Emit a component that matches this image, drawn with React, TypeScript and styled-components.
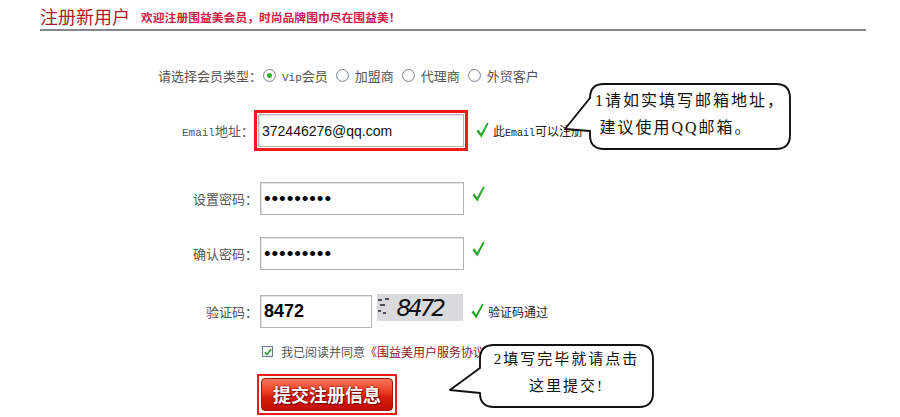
import React from 'react';
import styled, { createGlobalStyle } from 'styled-components';

const GlobalStyle = createGlobalStyle`
  html, body {
    margin: 0;
    padding: 0;
    background: #fff;
  }
  body {
    font-family: "Noto Sans CJK SC", sans-serif;
  }
`;

const CJK = '"Noto Sans CJK SC", sans-serif';

const Page = styled.div`
  position: relative;
  width: 900px;
  height: 417px;
  overflow: hidden;
  background: #fff;
`;

const Header = styled.div`
  display: flex;
  align-items: flex-end;
  gap: 11px;
  margin-left: 40px;
  width: 826px;
  height: 29px;
  border-bottom: 2px solid #86868f;
`;

const Title = styled.h1`
  margin: 0;
  padding-bottom: 4px;
  font-family: ${CJK};
  font-size: 18px;
  font-weight: normal;
  line-height: 1;
  color: #a61f2b;
`;

const Slogan = styled.span`
  padding-bottom: 6px;
  font-family: ${CJK};
  font-size: 11.8px;
  font-weight: bold;
  line-height: 1;
  color: #cc1d45;
`;

const Form = styled.div`
  display: flex;
  flex-direction: column;
`;

const Row = styled.div<{ $top: number; $h: number }>`
  display: flex;
  align-items: center;
  margin-top: ${(p) => p.$top}px;
  height: ${(p) => p.$h}px;
`;

const Label = styled.div<{ $w: number }>`
  flex: none;
  width: ${(p) => p.$w}px;
  text-align: right;
  font-family: ${CJK};
  font-size: 13px;
  color: #555;
  white-space: nowrap;
`;

const Mono = styled.span<{ $size?: number }>`
  font-family: "Liberation Mono", monospace;
  font-size: ${(p) => p.$size ?? 11}px;
`;

const Field = styled.div<{ $gap: number }>`
  display: flex;
  align-items: center;
  margin-left: ${(p) => p.$gap}px;
  height: 100%;
`;

const RedFrame = styled.div`
  display: flex;
  padding: 1px;
  border: 3px solid #f21a1a;
`;

const TextInput = styled.input<{ $w: number }>`
  box-sizing: border-box;
  width: ${(p) => p.$w}px;
  height: 33px;
  margin: 0;
  padding: 0 3px;
  border: 1px solid #b4b4b4;
  box-shadow: inset 1px 1px 0 #e4e4e4;
  outline: none;
  background: #fff;
  font-family: "Liberation Sans", Arial, sans-serif;
  font-size: 14px;
  color: #111;
`;

const PassInput = styled(TextInput)`
  font-size: 19px;
  letter-spacing: 0.9px;
  color: #000;
`;

const CodeInput = styled(TextInput)`
  font-size: 18px;
  font-weight: bold;
  color: #000;
`;

const CheckWrap = styled.span<{ $lift: number }>`
  display: inline-flex;
  margin-left: 8px;
  margin-top: -${(p) => p.$lift}px;
`;

const Hint = styled.span`
  margin-left: 4px;
  font-family: ${CJK};
  font-size: 12px;
  color: #222;
  white-space: nowrap;
`;

const Check = ({ lift = 0 }: { lift?: number }) => (
  <CheckWrap $lift={lift}>
    <svg width="13" height="16" viewBox="0 0 13 16">
      <path d="M0.5 9.2 L2.6 7.6 L5 11.6 L11.2 0.6 L12.6 1.6 L5.4 15.4 Z" fill="#22a626" />
    </svg>
  </CheckWrap>
);

const RadioGroup = styled.div`
  display: flex;
  align-items: center;
  gap: 8px;
`;

const Option = styled.label`
  display: flex;
  align-items: center;
  gap: 6px;
  font-family: ${CJK};
  font-size: 13px;
  color: #555;
`;

const RadioDot = styled.span<{ $on?: boolean }>`
  box-sizing: border-box;
  display: inline-flex;
  align-items: center;
  justify-content: center;
  width: 13px;
  height: 13px;
  border: 1px solid #7c8798;
  border-radius: 50%;
  background: radial-gradient(circle at 40% 35%, #fff 40%, #e2e5ea 100%);

  &::after {
    content: '';
    display: ${(p) => (p.$on ? 'block' : 'none')};
    width: 5px;
    height: 5px;
    border-radius: 50%;
    background: #2cb52c;
  }
`;

const Captcha = styled.div`
  position: relative;
  display: flex;
  align-items: center;
  justify-content: flex-end;
  align-self: flex-start;
  box-sizing: border-box;
  width: 86px;
  height: 27px;
  margin-left: 5px;
  padding-right: 20px;
  background: #d9dade;
  font-family: "DejaVu Sans", sans-serif;
  font-style: italic;
  font-size: 23px;
  letter-spacing: -3px;
  color: #111;
`;

const Noise = styled.svg`
  position: absolute;
  left: 0;
  top: 0;
`;

const AgreeBox = styled.span`
  box-sizing: border-box;
  display: inline-flex;
  align-items: center;
  justify-content: center;
  width: 11px;
  height: 11px;
  margin-left: 262px;
  border: 1px solid #6b7c94;
  background: linear-gradient(#fff, #e6e9ee);
`;

const AgreeText = styled.span`
  margin-left: 8px;
  font-family: ${CJK};
  font-size: 12px;
  color: #555;
  white-space: nowrap;
`;

const Terms = styled.span`
  color: #8e1420;
`;

const ButtonFrame = styled.div`
  display: flex;
  margin-left: 257px;
  padding: 2px;
  border: 2px solid #f01c1c;
`;

const SubmitButton = styled.button`
  box-sizing: border-box;
  width: 132px;
  height: 33px;
  margin: 0;
  padding: 0 0 2px;
  border: 1px solid #9a1a0c;
  border-radius: 4px;
  background: linear-gradient(#f7775c 0%, #ec3f24 40%, #d81d0c 60%, #c40d04 100%);
  font-family: ${CJK};
  font-size: 18px;
  font-weight: bold;
  line-height: 1;
  color: #fff;
  text-shadow: 0 0 2px #6a0000, 1px 1px 1px #700;
`;

const BubbleBox = styled.div<{ $x: number; $y: number; $w: number; $h: number }>`
  position: absolute;
  left: ${(p) => p.$x}px;
  top: ${(p) => p.$y}px;
  width: ${(p) => p.$w}px;
  height: ${(p) => p.$h}px;
`;

const BubbleShape = styled.svg`
  position: absolute;
  left: 0;
  top: 0;
  overflow: visible;
`;

const BubbleText = styled.div<{ $size: number }>`
  position: absolute;
  inset: 0 0 6px 0;
  display: flex;
  flex-direction: column;
  align-items: center;
  justify-content: center;
  gap: 6px;
  font-family: "Liberation Serif", ${CJK};
  font-size: ${(p) => p.$size}px;
  letter-spacing: 2px;
  line-height: 21px;
  color: #111;
  white-space: nowrap;
`;

const Line = styled.span<{ $shift?: number }>`
  margin-right: ${(p) => p.$shift ?? 0}px;
`;

interface BubbleProps {
  x: number;
  y: number;
  w: number;
  h: number;
  t1: number;
  t2: number;
  tipX: number;
  tipY: number;
  size: number;
  children: React.ReactNode;
}

function Bubble({ x, y, w, h, t1, t2, tipX, tipY, size, children }: BubbleProps) {
  const r = 14;
  const d = `M${r} 0 H${w - r} Q${w} 0 ${w} ${r} V${h - r} Q${w} ${h} ${w - r} ${h} H${r} Q0 ${h} 0 ${h - r} V${t2} L${tipX} ${tipY} L0 ${t1} V${r} Q0 0 ${r} 0 Z`;
  return (
    <BubbleBox $x={x} $y={y} $w={w} $h={h}>
      <BubbleShape width={w} height={h}>
        <path d={d} fill="#fff" stroke="#111" strokeWidth="1.9" strokeLinejoin="round" />
      </BubbleShape>
      <BubbleText $size={size}>{children}</BubbleText>
    </BubbleBox>
  );
}

export default function App() {
  return (
    <Page>
      <GlobalStyle />
      <Header>
        <Title>注册新用户</Title>
        <Slogan>欢迎注册围益美会员，时尚品牌围巾尽在围益美！</Slogan>
      </Header>

      <Form>
        <Row $top={29} $h={30}>
          <Label $w={262}>请选择会员类型：</Label>
          <Field $gap={1}>
            <RadioGroup>
              <Option>
                <RadioDot $on />
                <span>
                  <Mono>Vip</Mono>会员
                </span>
              </Option>
              <Option>
                <RadioDot />
                加盟商
              </Option>
              <Option>
                <RadioDot />
                代理商
              </Option>
              <Option>
                <RadioDot />
                外贸客户
              </Option>
            </RadioGroup>
          </Field>
        </Row>

        <Row $top={20} $h={41}>
          <Label $w={254}>
            <Mono>Email</Mono>地址：
          </Label>
          <Field $gap={0}>
            <RedFrame>
              <TextInput $w={206} defaultValue="372446276@qq.com" readOnly />
            </RedFrame>
            <Check lift={2} />
            <Hint>
              此<Mono $size={10}>Email</Mono>可以注册
            </Hint>
          </Field>
        </Row>

        <Row $top={31} $h={33}>
          <Label $w={258}>设置密码：</Label>
          <Field $gap={2}>
            <PassInput $w={204} type="password" defaultValue="123456789" readOnly />
            <Check lift={10} />
          </Field>
        </Row>

        <Row $top={22} $h={33}>
          <Label $w={258}>确认密码：</Label>
          <Field $gap={2}>
            <PassInput $w={204} type="password" defaultValue="123456789" readOnly />
            <Check lift={10} />
          </Field>
        </Row>

        <Row $top={24} $h={34}>
          <Label $w={258}>验证码：</Label>
          <Field $gap={2}>
            <CodeInput $w={112} defaultValue="8472" readOnly />
            <Captcha>
              <Noise width="20" height="27" viewBox="0 0 20 27">
                <path d="M1 6 H5 M8 5 H12 M3 11 H8 M1 17 H4 M6 19 H9" stroke="#222" strokeWidth="1.3" />
              </Noise>
              8472
            </Captcha>
            <Check lift={0} />
            <Hint>验证码通过</Hint>
          </Field>
        </Row>

        <Row $top={17} $h={13}>
          <AgreeBox>
            <svg width="8" height="8" viewBox="0 0 8 8">
              <path d="M0.8 4.2 L3 6.4 L7.2 1.2" fill="none" stroke="#2a9a2a" strokeWidth="1.6" />
            </svg>
          </AgreeBox>
          <AgreeText>
            我已阅读并同意<Terms>《围益美用户服务协议》</Terms>
          </AgreeText>
        </Row>

        <Row $top={16} $h={41}>
          <ButtonFrame>
            <SubmitButton type="button">提交注册信息</SubmitButton>
          </ButtonFrame>
        </Row>
      </Form>

      <Bubble x={590} y={84} w={200} h={65} t1={14} t2={47} tipX={-25} tipY={45} size={16}>
        <Line>1请如实填写邮箱地址，</Line>
        <Line $shift={28}>建议使用QQ邮箱。</Line>
      </Bubble>

      <Bubble x={480} y={345} w={173} h={62} t1={23} t2={48} tipX={-30} tipY={45} size={15}>
        <Line>2填写完毕就请点击</Line>
        <Line>这里提交!</Line>
      </Bubble>
    </Page>
  );
}
